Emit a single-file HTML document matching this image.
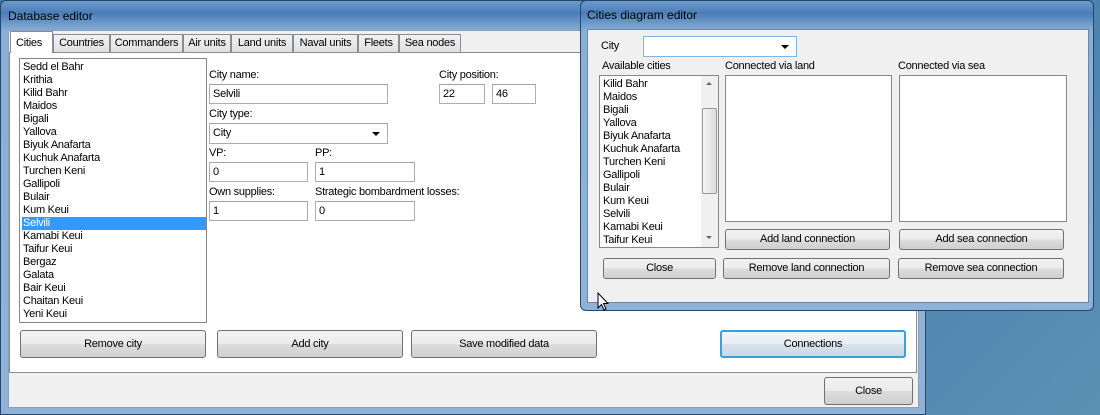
<!DOCTYPE html>
<html><head><meta charset="utf-8"><style>
*{box-sizing:border-box;margin:0;padding:0}
body{width:1100px;height:415px;overflow:hidden;position:relative;font-family:"Liberation Sans",sans-serif;font-size:11px;letter-spacing:-0.25px;color:#000;
background:linear-gradient(135deg,#3f78a6,#5a8fb8 40%,#4a82ad 70%,#5d90b5);}
.a{position:absolute}
.frame{background:linear-gradient(180deg,#6f9bcb 0,#4a7db8 12px,#8aafd6 30px,#8fb3d8 100%);border:1px solid #24476e;border-radius:6px 6px 0 0}
.title{font-size:12px;color:#000;letter-spacing:0}
.client{background:#f0f0f0;border:1px solid #6a86a8}
.white{background:#fff;border:1px solid #898c95}
.list{background:#fff;border:1px solid #828790;line-height:13px;padding:2px 0 0 3px;overflow:hidden}
.list div{height:13px;white-space:nowrap}
.sel{background:#3399ff;color:#fff;margin-left:-1px;padding-left:1px}
.inp{background:#fff;border:1px solid #abadb3;border-top-color:#a0a3aa;padding:3px 3px;height:20px;line-height:12px}
.btn{background:linear-gradient(#f2f2f2,#ebebeb 50%,#dddddd 51%,#cfcfcf);border:1px solid #707070;border-radius:3px;text-align:center;line-height:19px}
.tab{background:linear-gradient(#f2f2f2,#e0e0e0);border:1px solid #898c95;border-bottom:none;height:18px;line-height:16px;text-align:center;top:34px;white-space:nowrap}
.arr{position:absolute;right:7px;top:8px;width:0;height:0;border-left:4px solid transparent;border-right:4px solid transparent;border-top:4px solid #000}
</style></head><body>

<div class="a frame" style="left:0;top:0;width:926px;height:415px"></div>
<div class="a title" style="left:8px;top:9px">Database editor</div>
<div class="a client" style="left:8px;top:30px;width:911px;height:378px;border-color:#8aa0bb"></div>
<div class="a tab" style="left:53px;width:57px">Countries</div>
<div class="a tab" style="left:110px;width:73px">Commanders</div>
<div class="a tab" style="left:183px;width:48px">Air units</div>
<div class="a tab" style="left:231px;width:62px">Land units</div>
<div class="a tab" style="left:293px;width:65px">Naval units</div>
<div class="a tab" style="left:358px;width:41px">Fleets</div>
<div class="a tab" style="left:399px;width:62px">Sea nodes</div>
<div class="a white" style="left:9px;top:52px;width:908px;height:321px"></div>
<div class="a" style="left:10px;top:31px;width:43px;height:22px;background:#fff;border:1px solid #898c95;border-bottom:none;padding:5px 0 0 5px">Cities</div>

<div class="a list" style="left:19px;top:58px;width:188px;height:265px">
<div>Sedd el Bahr</div><div>Krithia</div><div>Kilid Bahr</div><div>Maidos</div><div>Bigali</div><div>Yallova</div><div>Biyuk Anafarta</div><div>Kuchuk Anafarta</div><div>Turchen Keni</div><div>Gallipoli</div><div>Bulair</div><div>Kum Keui</div><div class="sel">Selvili</div><div>Kamabi Keui</div><div>Taifur Keui</div><div>Bergaz</div><div>Galata</div><div>Bair Keui</div><div>Chaitan Keui</div><div>Yeni Keui</div>
</div>

<div class="a" style="left:209px;top:69px">City name:</div>
<div class="a inp" style="left:209px;top:84px;width:179px">Selvili</div>
<div class="a" style="left:209px;top:108px">City type:</div>
<div class="a inp" style="left:209px;top:123px;width:179px;height:21px">City<span class="arr"></span></div>
<div class="a" style="left:209px;top:147px">VP:</div>
<div class="a inp" style="left:209px;top:162px;width:99px">0</div>
<div class="a" style="left:315px;top:147px">PP:</div>
<div class="a inp" style="left:315px;top:162px;width:100px">1</div>
<div class="a" style="left:209px;top:186px">Own supplies:</div>
<div class="a inp" style="left:209px;top:201px;width:99px">1</div>
<div class="a" style="left:315px;top:186px">Strategic bombardment losses:</div>
<div class="a inp" style="left:315px;top:201px;width:100px">0</div>
<div class="a" style="left:439px;top:69px">City position:</div>
<div class="a inp" style="left:439px;top:84px;width:46px">22</div>
<div class="a inp" style="left:492px;top:84px;width:44px">46</div>

<div class="a btn" style="left:20px;top:330px;width:186px;height:28px;line-height:26px">Remove city</div>
<div class="a btn" style="left:217px;top:330px;width:186px;height:28px;line-height:26px">Add city</div>
<div class="a btn" style="left:411px;top:330px;width:186px;height:28px;line-height:26px">Save modified data</div>
<div class="a btn" style="left:720px;top:330px;width:186px;height:28px;line-height:24px;border:2px solid #3c9fd6;background:linear-gradient(#f2f5f8,#e8eef4 50%,#d8e2ec 51%,#cdd8e3)">Connections</div>
<div class="a btn" style="left:824px;top:377px;width:89px;height:28px;line-height:26px">Close</div>

<div class="a frame" style="left:580px;top:0;width:514px;height:311px;border-radius:6px"></div>
<div class="a title" style="left:587px;top:8px">Cities diagram editor</div>
<div class="a client" style="left:587px;top:29px;width:502px;height:274px"></div>
<div class="a" style="left:601px;top:40px">City</div>
<div class="a inp" style="left:643px;top:36px;width:154px;height:21px;border-color:#7eb4ea"><span class="arr"></span></div>
<div class="a" style="left:602px;top:60px">Available cities</div>
<div class="a" style="left:725px;top:60px">Connected via land</div>
<div class="a" style="left:898px;top:60px">Connected via sea</div>
<div class="a list" style="left:599px;top:75px;width:120px;height:173px">
<div>Kilid Bahr</div><div>Maidos</div><div>Bigali</div><div>Yallova</div><div>Biyuk Anafarta</div><div>Kuchuk Anafarta</div><div>Turchen Keni</div><div>Gallipoli</div><div>Bulair</div><div>Kum Keui</div><div>Selvili</div><div>Kamabi Keui</div><div>Taifur Keui</div>
</div>
<div class="a" style="left:701px;top:76px;width:17px;height:171px;background:#f0f0f0"></div>
<div class="a" style="left:702px;top:108px;width:15px;height:86px;border:1px solid #999;border-radius:2px;background:linear-gradient(90deg,#f4f4f4,#dcdcdc)"></div>
<div class="a" style="left:706px;top:82px;border-left:3px solid transparent;border-right:3px solid transparent;border-bottom:3px solid #666"></div>
<div class="a" style="left:706px;top:236px;border-left:3px solid transparent;border-right:3px solid transparent;border-top:3px solid #666"></div>
<div class="a white" style="left:725px;top:75px;width:167px;height:147px;border-color:#828790"></div>
<div class="a white" style="left:899px;top:75px;width:168px;height:147px;border-color:#828790"></div>
<div class="a btn" style="left:725px;top:229px;width:165px;height:21px">Add land connection</div>
<div class="a btn" style="left:899px;top:229px;width:165px;height:21px">Add sea connection</div>
<div class="a btn" style="left:603px;top:258px;width:113px;height:21px">Close</div>
<div class="a btn" style="left:723px;top:258px;width:167px;height:21px">Remove land connection</div>
<div class="a btn" style="left:898px;top:258px;width:166px;height:21px">Remove sea connection</div>

<svg class="a" style="left:597px;top:292px" width="14" height="20" viewBox="0 0 14 20"><path d="M1 1 L1 16 L4.5 12.5 L7 18 L9 17 L6.5 11.5 L11 11.5 Z" fill="#fff" stroke="#000" stroke-width="1"/></svg>
</body></html>
